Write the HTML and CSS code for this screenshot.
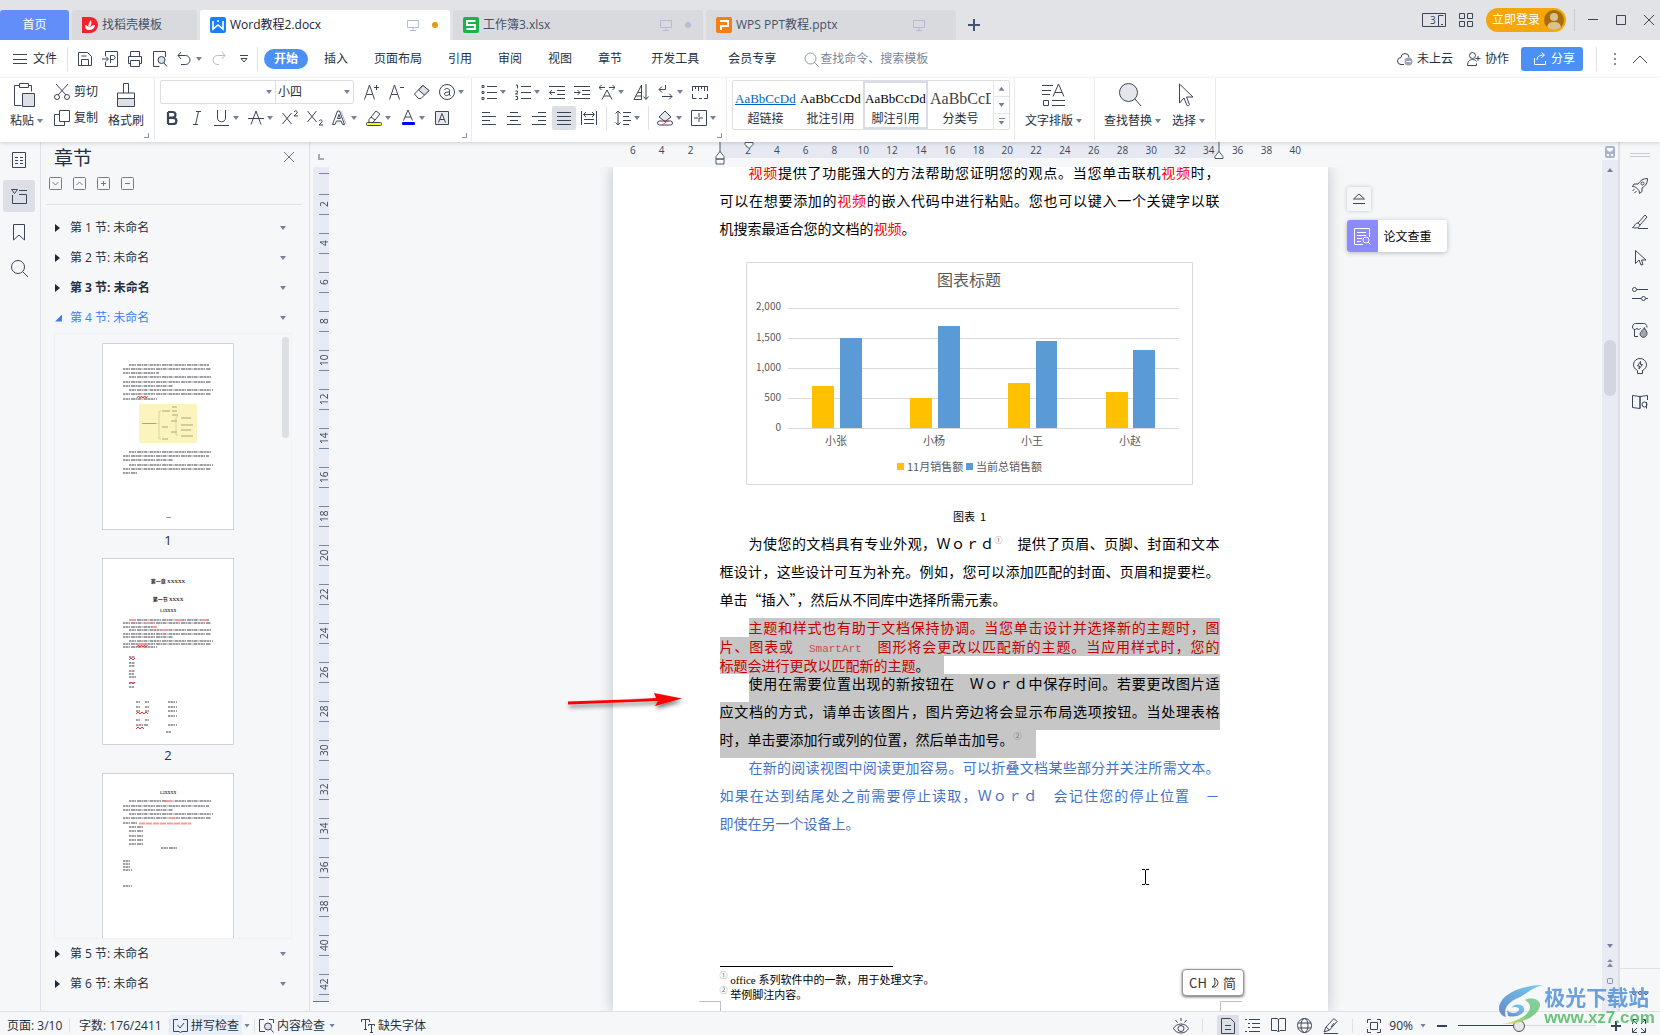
FILE: index.html
```html
<!DOCTYPE html>
<html lang="zh-CN">
<head>
<meta charset="utf-8">
<title>Word教程2.docx</title>
<link rel="stylesheet" href="styles.css">
</head>
<body>
<div class="app">

<header class="tabs">
  <button class="tab home">首页</button>
  <button class="tab docer">
    <svg width="16" height="16" viewBox="0 0 16 16"><path d="M0 0h8a8 8 0 0 1 0 16H0z" fill="#f5222d"/><path d="M3 8c2 0 3 1 3.500 3C6 8 7 5 9 3c1 3 0 6-1.500 8C9 9 11 8 13 8c0 3-3 5-6 5S3 11 3 8z" fill="#fff"/></svg>
    <span>找稻壳模板</span>
  </button>
  <button class="tab file active">
    <svg width="16" height="16" viewBox="0 0 16 16"><rect width="16" height="16" rx="2" fill="#1a80fa"/><path d="M3 4v8l5-4 5 4V4M7 4h2" fill="none" stroke="#fff" stroke-width="1.600"/></svg>
    <span class="name">Word教程2.docx</span>
    <svg class="mon" width="12" height="12" viewBox="0 0 12 12"><path d="M.5 1.500h11v7H.5zM6 8.500v3M3 11.500h6"/></svg>
    <i class="dot"></i>
  </button>
  <button class="tab file">
    <svg width="16" height="16" viewBox="0 0 16 16"><rect width="16" height="16" rx="2" fill="#17b34b"/><path d="M12.500 4H4v4h8v4H3.500" fill="none" stroke="#fff" stroke-width="2"/></svg>
    <span class="name">工作簿3.xlsx</span>
    <svg class="mon" width="12" height="12" viewBox="0 0 12 12"><path d="M.5 1.500h11v7H.5zM6 8.500v3M3 11.500h6"/></svg>
    <i class="dot dim"></i>
  </button>
  <button class="tab file">
    <svg width="16" height="16" viewBox="0 0 16 16"><rect width="16" height="16" rx="2" fill="#f57f17"/><path d="M4 4h8v5H5v4" fill="none" stroke="#fff" stroke-width="2"/></svg>
    <span class="name">WPS PPT教程.pptx</span>
    <svg class="mon" width="12" height="12" viewBox="0 0 12 12"><path d="M.5 1.500h11v7H.5zM6 8.500v3M3 11.500h6"/></svg>
    <i class="dot none"></i>
  </button>
  <button class="plus" aria-label="新建"><svg width="12" height="12" viewBox="0 0 12 12"><path d="M6 0v12M0 6h12" stroke="#44546f" stroke-width="2"/></svg></button>
  <div class="win">
    <svg class="i" width="24" height="14" viewBox="0 0 24 14"><path d="M.5.5h23v13H.5zM16.500 13V2.500h5M19 11.500h2"/><text x="8" y="11" class="n3">3</text></svg>
    <svg class="i" width="14" height="14" viewBox="0 0 14 14"><path d="M.5.500h5v5h-5zM8.500.5h5v5h-5zM.5 8.500h5v5h-5zM8.500 8.500h5v5h-5z"/></svg>
    <button class="login">立即登录<svg width="20" height="20" viewBox="0 0 20 20"><circle cx="10" cy="10" r="10" fill="#a3700c"/><circle cx="10" cy="7" r="4" fill="#d9c08c"/><path d="M3 17c1-4 3-5 7-5s6 1 7 5c-4 4-10 4-14 0z" fill="#d9c08c"/></svg></button>
    <i class="vr tall"></i>
    <svg class="i" width="10" height="10" viewBox="0 0 10 10"><path d="M0 4.500h10"/></svg>
    <svg class="i" width="10" height="10" viewBox="0 0 10 10"><path d="M.5.500h9v9h-9z"/></svg>
    <svg class="i" width="10" height="10" viewBox="0 0 10 10"><path d="M0 0l10 10M10 0L0 10"/></svg>
  </div>
</header>

<nav class="menu">
  <button class="filebtn"><svg class="i" width="14" height="12" viewBox="0 0 14 12"><path d="M0 1.500h14M0 6.500h14M0 10.500h14"/></svg>文件</button>
  <i class="vr"></i>
  <div class="quick">
    <svg class="i" width="16" height="16" viewBox="0 0 16 16"><path d="M1.500 15V1.500h9l4 4V14.500h-13M4.500 14.500v-6h7v6M4.500 5h5"/></svg>
    <svg class="i" width="16" height="16" viewBox="0 0 16 16"><path d="M3.500 5V.5h12v15h-12V11M0 8h6M4 5.500L6.500 8 4 10.500M8.500 12V4.500h3c2 0 2 4 0 4h-3"/></svg>
    <svg class="i" width="16" height="16" viewBox="0 0 16 16"><path d="M3.500 5V.5h9V5M3.500 12.500h-2v-7h13v7h-2M3.500 9.500h9v6h-9z"/></svg>
    <svg class="i" width="16" height="16" viewBox="0 0 16 16"><path d="M13.500 6V.5h-12v15h6"/><circle cx="9.500" cy="9" r="3.500" fill="#dde0e6"/><path d="M12 12l3 3.500"/></svg>
    <svg class="i" width="14" height="14" viewBox="0 0 14 14"><path d="M4 0L1 3.500 4 7M1 3.500h7.500a4.500 4.500 0 0 1 0 9H4"/></svg>
    <i class="caret"></i>
    <svg class="i pale" width="14" height="14" viewBox="0 0 14 14"><path d="M10 0l3 3.500L10 7M13 3.500H5.500a4.500 4.500 0 0 0 0 9H7"/></svg>
    <svg class="i" width="8" height="8" viewBox="0 0 8 8"><path d="M0 .5h8M1 3.500h6L4 7z"/></svg>
  </div>
  <i class="vr"></i>
  <div class="items">
    <button class="pill">开始</button><button>插入</button><button>页面布局</button><button>引用</button><button>审阅</button><button>视图</button><button>章节</button><button class="wide">开发工具</button><button class="wide">会员专享</button>
  </div>
  <label class="search"><svg class="i" width="15" height="15" viewBox="0 0 15 15"><circle cx="6.500" cy="6.500" r="5.500"/><path d="M10.500 10.500l4 4"/></svg><input type="text" placeholder="查找命令、搜索模板" aria-label="查找命令"></label>
  <div class="mright">
    <button><svg class="i" width="16" height="14" viewBox="0 0 16 14"><path d="M7 12.500H4a3.500 3.500 0 0 1 0-7 4 4 0 0 1 8 0"/><circle cx="11.500" cy="9.500" r="4" fill="#9aa3b8" stroke="none"/><path d="M9 9.500h5" stroke="#fff"/></svg>未上云</button>
    <button class="co"><svg class="i" width="14" height="14" viewBox="0 0 14 14"><circle cx="5.500" cy="3.500" r="3"/><path d="M.5 13.500c0-4 2-6 5-6 2 0 3 .5 4 2M.5 13.500h9v-2M8.500 6.500h5M11 4v5"/></svg>协作</button>
    <button class="share"><svg class="i" width="14" height="14" viewBox="0 0 14 14"><path d="M1.500 6v6.500h11V9M4 8c0-3 2-5 7-5M8.500.500L11.500 3 8.500 5.500"/></svg>分享</button>
    <i class="vr tall"></i>
    <svg class="i vdots" width="4" height="14" viewBox="0 0 4 14"><path d="M1 1h2v2H1zM1 6h2v2H1zM1 11h2v2H1z"/></svg>
    <svg class="i" width="14" height="8" viewBox="0 0 14 8"><path d="M0 8l7-7 7 7"/></svg>
  </div>
</nav>

<section class="ribbon">
  <div class="group clip">
    <button class="big drop"><svg class="i" width="22" height="24" viewBox="0 0 22 24"><path d="M6.500 2.500h-5v20h7M15.500 2.500h3v6M6.500.5h9v4h-9z"/><path d="M9.500 10.500h12v13h-12z" fill="#dde0e6"/></svg><span>粘贴<i class="caret"></i></span></button>
    <div class="pair">
      <button><svg class="i" width="16" height="16" viewBox="0 0 16 16"><path d="M2 0l10 11M14 0L4 11"/><circle cx="3" cy="13" r="2.500"/><circle cx="13" cy="13" r="2.500"/></svg>剪切</button>
      <button><svg class="i" width="16" height="16" viewBox="0 0 16 16"><path d="M5.500.5h10v11h-10zM5 4.500H.5v11h10V12"/></svg>复制</button>
    </div>
    <button class="big"><svg class="i" width="20" height="24" viewBox="0 0 20 24"><path d="M7.500 10V.5h5V10M1.500 16v-6h17v6"/><path d="M1.500 15.500h17v8h-17z" fill="#dde0e6"/></svg><span>格式刷</span></button>
    <i class="corner"></i>
  </div>

  <div class="group font">
    <div class="rows">
      <div class="row">
        <div class="combo"><input type="text" class="fname" aria-label="字体"><i class="caret"></i><select class="fsize" aria-label="字号"><option>小四</option></select><i class="caret"></i></div>
        <button class="ib"><svg class="i" width="16" height="16" viewBox="0 0 16 16"><path d="M.5 15.500L5.500 1l5 14.500M2.500 10.500h6M10 3.500h5M12.500 1v5"/></svg></button>
        <button class="ib"><svg class="i" width="16" height="16" viewBox="0 0 16 16"><path d="M.5 15.500L5.500 1l5 14.500M2.500 10.500h6M11 3.500h4"/></svg></button>
        <button class="ib"><svg class="i" width="16" height="16" viewBox="0 0 16 16"><path d="M.5 10L8.500 1.500l6.500 5-8 8H4.500z"/><path d="M4.500 6l4.500-4.500 6 5-4.500 4.500z" fill="#dde0e6"/></svg></button>
        <button class="ib dd"><svg class="i" width="16" height="16" viewBox="0 0 16 16"><circle cx="8" cy="8" r="7.500"/><path d="M5.500 6c.5-2 5-2 5 .5V11c0 .5.500.500 1 .500M10.500 8c-2 0-5 0-5 2s3.500 2 5 0"/></svg><i class="caret"></i></button>
      </div>
      <div class="row r2">
        <button class="ib"><svg class="i" width="16" height="16" viewBox="0 0 16 16"><path d="M4 2v12M4 2h4.500c4 0 4 5.500 0 5.500H4M4 7.800h5c4.500 0 4.500 6.200 0 6.200H4" stroke-width="2.200"/></svg></button>
        <button class="ib"><svg class="i" width="16" height="16" viewBox="0 0 16 16"><path d="M7 1.500h5M4 14.500h5M9.500 1.500L6.500 14.500"/></svg></button>
        <button class="ib dd"><svg class="i" width="16" height="16" viewBox="0 0 16 16"><path d="M3.500 0v8c0 5 8 5 8 0V0M0 15.500h15"/></svg><i class="caret"></i></button>
        <button class="ib dd"><svg class="i" width="16" height="16" viewBox="0 0 16 16"><path d="M3 14.500L8 1l5 13.500M0 8.500h16"/></svg><i class="caret"></i></button>
        <button class="ib"><svg class="i" width="17" height="16" viewBox="0 0 17 16"><path d="M.5 3l9 11M9.500 3l-9 11M12 2c1-2 4-1 3 1l-3 3h4"/></svg></button>
        <button class="ib"><svg class="i" width="17" height="16" viewBox="0 0 17 16"><path d="M.5 1l9 11M9.500 1l-9 11M12 11c1-2 4-1 3 1l-3 3h4"/></svg></button>
        <button class="ib dd"><svg class="i" width="16" height="16" viewBox="0 0 16 16"><path d="M.5 14.500L5.500 1h2l5 13.500h-2L9 11H4.500L3 14.500zM5.500 8.500h3l-1.500-4z"/><path d="M9 1l5 13" stroke="#b4bac8"/></svg><i class="caret"></i></button>
        <button class="ib dd"><svg class="i" width="16" height="16" viewBox="0 0 16 16"><path d="M3 9.500L10 1l4 3-7 8.500H3zM5 7l4 3"/><rect x=".5" y="12.500" width="15" height="3" rx="1" fill="#ff0"/></svg><i class="caret"></i></button>
        <button class="ib dd"><svg class="i" width="16" height="16" viewBox="0 0 16 16"><path d="M3.500 10.500L8 0l4.500 10.500M5 7h6"/><rect x="2" y="12" width="13" height="3" rx="1" fill="#00f" stroke="none"/></svg><i class="caret"></i></button>
        <button class="ib"><svg class="i" width="16" height="16" viewBox="0 0 16 16"><path d="M1.500 1.500h13v13h-13z" fill="#e6e8ec"/><path d="M4.500 12.500L8 3.500l3.500 9M6 9.500h4"/></svg></button>
      </div>
    </div>
    <i class="corner"></i>
  </div>

  <div class="group para">
    <div class="rows">
      <div class="row">
        <button class="ib dd"><svg class="i" width="16" height="16" viewBox="0 0 16 16"><path d="M6 2.500h10M6 8.500h10M6 14.500h10M1 1.500h2v2H1zM1 7.500h2v2H1zM1 13.500h2v2H1z"/></svg><i class="caret"></i></button>
        <button class="ib dd"><svg class="i" width="16" height="16" viewBox="0 0 16 16"><path d="M6 2.500h10M6 8.500h10M6 14.500h10M1 1h1.500v3.500M.5 7h2v1.500l-2 1.500h2.500M.5 12.500h2v3h-2"/></svg><i class="caret"></i></button>
        <button class="ib"><svg class="i" width="16" height="16" viewBox="0 0 16 16"><path d="M0 2.500h16M8 6.500h8M8 10.500h8M0 14.500h16M6 8.500H.5M3 6L.5 8.500 3 11"/></svg></button>
        <button class="ib"><svg class="i" width="16" height="16" viewBox="0 0 16 16"><path d="M0 2.500h16M8 6.500h8M8 10.500h8M0 14.500h16M0 8.500h6M3.500 6L6 8.500 3.500 11"/></svg></button>
        <button class="ib dd"><svg class="i" width="16" height="16" viewBox="0 0 16 16"><path d="M3 15.500L8 6l5 9.500M5 12h6M0 3.500h6M2.500 1L0 3.500 2.500 6M10 3.500h6M13.500 1L16 3.500 13.500 6"/></svg><i class="caret"></i></button>
        <button class="ib"><svg class="i" width="16" height="16" viewBox="0 0 16 16"><path d="M1 15.500L8.500 1v14.500zM5 8.500h3.500M3 12h5.500M13 0v15M10.500 12.500L13 15.500l2.500-3"/></svg></button>
        <button class="ib dd"><svg class="i" width="16" height="16" viewBox="0 0 16 16"><path d="M7.500 1v4.500H1M4 2.500l-3 3 3 3M4 12.500h10M11 9.500l3 3-3 3"/></svg><i class="caret"></i></button>
        <button class="ib"><svg class="i" width="16" height="16" viewBox="0 0 16 16"><path d="M0 2.500h16M.5 2v5M3.500 2v3M6.500 2v5M9.500 2v3M12.500 2v5M15.500 2v5M.5 10v4.500h4M7 14.500h3M12 14.500h3.500V10"/></svg></button>
      </div>
      <div class="row r2">
        <button class="ib"><svg class="i" width="16" height="16" viewBox="0 0 16 16"><path d="M1 2.500h8M1 6.500h14M1 10.500h8M1 14.500h14"/></svg></button>
        <button class="ib"><svg class="i" width="16" height="16" viewBox="0 0 16 16"><path d="M4 2.500h8M1 6.500h14M4 10.500h8M1 14.500h14"/></svg></button>
        <button class="ib"><svg class="i" width="16" height="16" viewBox="0 0 16 16"><path d="M7 2.500h8M1 6.500h14M7 10.500h8M1 14.500h14"/></svg></button>
        <button class="ib on"><svg class="i" width="16" height="16" viewBox="0 0 16 16"><path d="M1 2.500h14M1 6.500h14M1 10.500h14M1 14.500h14"/></svg></button>
        <button class="ib"><svg class="i" width="16" height="16" viewBox="0 0 16 16"><path d="M.5 1v14M15.500 1v14M3 4.500h10M5 2L2.500 4.500 5 7M11 2l2.500 2.500L11 7M3 9.500h10M3 13.500h10"/></svg></button>
        <i class="vr"></i>
        <button class="ib dd"><svg class="i" width="16" height="16" viewBox="0 0 16 16"><path d="M3 1v14M.5 3.500L3 1l2.500 2.500M.5 12.500L3 15l2.500-2.500M8 2.500h8M8 6.500h6M8 10.500h8M8 14.500h6"/></svg><i class="caret"></i></button>
        <i class="vr"></i>
        <button class="ib dd"><svg class="i" width="16" height="16" viewBox="0 0 16 16"><path d="M2 7l6-6 6 6-6 4.500z" fill="#e6e8ec"/><rect x=".5" y="11" width="15" height="4" rx="2"/><path d="M5 15l7-5" stroke="#e05050"/></svg><i class="caret"></i></button>
        <button class="ib dd"><svg class="i" width="16" height="16" viewBox="0 0 16 16"><path d="M.5.500h15v15H.5z"/><path d="M8 3v10M3 8h10" stroke-dasharray="4 1"/></svg><i class="caret"></i></button>
      </div>
    </div>
    <i class="corner"></i>
  </div>

  <div class="group sty">
    <div class="gallery">
      <button class="st link"><b>AaBbCcDd</b><span>超链接</span></button>
      <button class="st"><b>AaBbCcDd</b><span>批注引用</span></button>
      <button class="st sel"><b>AaBbCcDd</b><span>脚注引用</span></button>
      <button class="st lg"><b>AaBbCcD</b><span>分类号</span></button>
      <div class="scr"><button aria-label="上"><i class="caret up"></i></button><button aria-label="下"><i class="caret"></i></button><button class="more" aria-label="更多"><i class="caret"></i></button></div>
    </div>
  </div>

  <div class="group typ">
    <button class="big"><svg class="i" width="23" height="24" viewBox="0 0 23 24"><path d="M0 2.500h11M0 7.500h9M0 11.500h8M11 13.500L16.500 1 22 13.500M13 9.500h7M1.500 17.500h5v5h-5zM10 17.500h13M10 22.500h13"/></svg><span>文字排版<i class="caret"></i></span></button>
  </div>
  <div class="group find">
    <button class="big drop"><svg class="i" width="24" height="24" viewBox="0 0 24 24"><circle cx="10.500" cy="9.500" r="9" fill="#e4e6ea"/><path d="M17 16l6 7"/></svg><span>查找替换<i class="caret"></i></span></button>
    <button class="big drop"><svg class="i" width="16" height="24" viewBox="0 0 16 24"><path d="M1.500 1v19l4.500-5 3 7.500c1 .500 2.500 0 2.500-1L8.500 14H15z"/></svg><span>选择<i class="caret"></i></span></button>
  </div>
</section>

<main class="work">
  <aside class="rail">
    <button><svg class="i" width="16" height="17" viewBox="0 0 16 17"><path d="M1.500.500h13v15h-13zM4 5.500h3M4 8.500h3M4 11.500h3M9 5.500h3M9 8.500h3M9 11.500h3"/></svg></button>
    <button class="on"><svg class="i" width="17" height="17" viewBox="0 0 17 17"><path d="M.5 1.500h6l-3 4zM8 2.500h8M8 6.500h7.500v9h-14V7"/></svg></button>
    <button><svg class="i" width="12" height="17" viewBox="0 0 12 17"><path d="M.5.500h11v15.500L6 11 .5 16z"/></svg></button>
    <button><svg class="i" width="17" height="17" viewBox="0 0 17 17"><circle cx="7" cy="7" r="6.500"/><path d="M12 12l5 5"/></svg></button>
  </aside>

  <aside class="panel">
    <div class="phead"><h2>章节</h2><button aria-label="关闭"><svg class="i" width="10" height="10" viewBox="0 0 10 10"><path d="M0 0l10 10M10 0L0 10"/></svg></button></div>
    <div class="ptools">
      <svg class="i" width="13" height="13" viewBox="0 0 13 13"><rect x=".5" y=".5" width="12" height="12" rx="1"/><path d="M3.500 5l3 3 3-3"/></svg>
      <svg class="i" width="13" height="13" viewBox="0 0 13 13"><rect x=".5" y=".5" width="12" height="12" rx="1"/><path d="M3.500 8l3-3 3 3"/></svg>
      <svg class="i" width="13" height="13" viewBox="0 0 13 13"><rect x=".5" y=".5" width="12" height="12" rx="1"/><path d="M4 6.500h5M6.500 4v5"/></svg>
      <svg class="i" width="13" height="13" viewBox="0 0 13 13"><rect x=".5" y=".5" width="12" height="12" rx="1"/><path d="M4 6.500h5"/></svg>
    </div>
    <div class="tree">
      <button class="sec"><i class="tri"></i><span>第 1 节: 未命名</span><i class="caret"></i></button>
      <button class="sec"><i class="tri"></i><span>第 2 节: 未命名</span><i class="caret"></i></button>
      <button class="sec bold"><i class="tri"></i><span>第 3 节: 未命名</span><i class="caret"></i></button>
      <button class="sec open"><i class="tri"></i><span>第 4 节: 未命名</span><i class="caret"></i></button>
      <div class="thumbs">
        <div class="tlist">
          <figure><svg width="130" height="185" viewBox="0 0 130 185">
            <g class="gk"><path d="M26 21h80M20 25h88M20 29h36M26 33h82M20 38h88M20 42h50M26 46h84M20 50h88M20 55h34"/><path d="M26 108h82M20 112h86M20 116h50M26 121h84M20 125h88M20 129h14"/></g>
            <path class="wv" d="M34 54l1.500-2 1.500 2 1.500-2 1.500 2 1.500-2 1.500 2 1.500-2"/>
            <rect x="36" y="60" width="58" height="39" fill="#fbf4bf"/>
            <path d="M39 79.500h14M59 67h8M59 83h6M59 95h6M69 63h5M69 67h5M69 71h6M68 77h6M68 88h6M78 74h10M78 81h12M78 86h10M78 92h12" stroke="#a9a578" stroke-width="1" /><path d="M53 79.500h3M58 67h-2v28h2M75 73h-2v18h2" fill="none" stroke="#c5c095" stroke-width=".6"/>
            <path d="M63 173.500h5" stroke="#999"/>
          </svg><figcaption>1</figcaption></figure>
          <figure><svg width="130" height="185" viewBox="0 0 130 185">
            <text x="65" y="24" class="th1">第一章 XXXXX</text><text x="65" y="42" class="th2">第一节 XXXX</text><text x="65" y="53" class="th3">1.1XXXX</text>
            <g class="gk"><path d="M26 61h80M20 64h88M20 68h34M26 71h82M20 75h88M20 78h50M26 82h84M20 85h88M20 88h34M26 98h6M26 104h6M26 107h6M26 112h6M26 115h5M26 118h7M26 124h6M26 128h5M33 143h4M42 143h4M65 143h9M33 148h4M42 148h4M65 148h9M33 152h4M42 152h4M65 152h9M33 161h4M42 161h4M65 157h9M33 166h12M65 166h9M63 173h5"/></g>
            <path d="M26 61h7M72 61h7M42 64h6M98 61h6M58 71h7M34 85h8M49 68h5" stroke="#f99" stroke-width="2"/>
            <path class="wv" d="M34 88l1.500-2 1.500 2 1.500-2 1.500 2 1.500-2 1.500 2 1.500-2M26 101l2-2 2 2 2-2M26 125l2-2 2 2 2-2M33 155l2-2 2 2 2-2 2 2 2-2 2 2M33 170l2-2 2 2 2-2 2 2"/>
          </svg><figcaption>2</figcaption></figure>
          <figure><svg width="130" height="185" viewBox="0 0 130 185">
            <text x="65" y="20" class="th3">1.2XXXX</text>
            <g class="gk"><path d="M26 27h83M20 32h86M20 36h50M26 40h84M20 44h88M20 49h14M26 53h14M26 57h14M26 62h14M26 66h14M26 70h14M58 74h16M20 87h8M20 90h7M20 93h7M20 96h9M20 112h9"/></g>
            <path d="M63 27h7M66 44h7M36 49.500h52" stroke="#f99" stroke-width="2" stroke-dasharray="6 1"/>
          </svg><figcaption>3</figcaption></figure>
        </div>
        <i class="sb"></i>
      </div>
      <button class="sec"><i class="tri"></i><span>第 5 节: 未命名</span><i class="caret"></i></button>
      <button class="sec"><i class="tri"></i><span>第 6 节: 未命名</span><i class="caret"></i></button>
    </div>
  </aside>

  <div class="vcol">
    <div class="vcorner"><i></i></div>
    <div class="vruler">
      <div class="u0"></div>
      <div><b>2</b></div><div><b>4</b></div><div><b>6</b></div><div><b>8</b></div><div><b>10</b></div><div><b>12</b></div><div><b>14</b></div><div><b>16</b></div><div><b>18</b></div><div><b>20</b></div><div><b>22</b></div><div><b>24</b></div><div><b>26</b></div><div><b>28</b></div><div><b>30</b></div><div><b>32</b></div><div><b>34</b></div><div><b>36</b></div><div><b>38</b></div><div><b>40</b></div><div><b>42</b></div>
    </div>
  </div>

  <div class="center">
    <div class="hruler">
      <div class="hin">
        <span>6</span><span>4</span><span>2</span><span></span><span>2</span><span>4</span><span>6</span><span>8</span><span>10</span><span>12</span><span>14</span><span>16</span><span>18</span><span>20</span><span>22</span><span>24</span><span>26</span><span>28</span><span>30</span><span>32</span><span>34</span><span>36</span><span>38</span><span>40</span>
        <svg class="mk m1" width="10" height="23" viewBox="0 0 10 23"><path d="M5 0v10M1 17v-2.500l4-5 4 5V17zM1 17h8v5H1z"/></svg>
        <svg class="mk m2" width="10" height="7" viewBox="0 0 10 7"><path d="M1 .500h8v2l-4 4-4-4z"/></svg>
        <svg class="mk m3" width="10" height="18" viewBox="0 0 10 18"><path d="M5 0v10M1 16.500v-2l4-5 4 5v2z"/></svg>
      </div>
    </div>
    <div class="canvas">
      <article class="page">
        <p class="l j in"><em>视频</em>提供了功能强大的方法帮助您证明您的观点。当您单击联机<em>视频</em>时，</p>
        <p class="l j">可以在想要添加的<em>视频</em>的嵌入代码中进行粘贴。您也可以键入一个关键字以联</p>
        <p class="l">机搜索最适合您的文档的<em>视频</em>。</p>
        <svg class="chart" width="447" height="223" viewBox="0 0 447 223">
          <path d="M.5.500h446v222H.5z" fill="#fff" stroke="#d9d9d9"/>
          <text x="223" y="24" class="ct">图表标题</text>
          <path d="M42 46.500h391M42 76.500h391M42 106.500h391M42 136.500h391M42 166.500h391" stroke="#d9d9d9"/>
          <g class="ax"><text x="35" y="48">2,000</text><text x="35" y="79">1,500</text><text x="35" y="109">1,000</text><text x="35" y="139">500</text><text x="35" y="169">0</text></g>
          <path d="M66 124h22v42H66zM164 136h22v30h-22zM262 121h22v45h-22zM360 130h22v36h-22z" fill="#ffc000"/>
          <path d="M94 76h22v90H94zM192 64h22v102h-22zM290 79h21v87h-21zM387 88h22v78h-22z" fill="#5b9bd5"/>
          <g class="cat"><text x="90" y="183">小张</text><text x="188" y="183">小杨</text><text x="286" y="183">小王</text><text x="384" y="183">小赵</text></g>
          <path d="M151 201h7v7h-7z" fill="#ffc000"/><path d="M220 201h7v7h-7z" fill="#5b9bd5"/>
          <g class="leg"><text x="161" y="209">11月销售额</text><text x="230" y="209">当前总销售额</text></g>
        </svg>
        <p class="cap">图表&nbsp; 1</p>
        <p class="l j in">为使您的文档具有专业外观，Ｗｏｒｄ<sup>①</sup>　提供了页眉、页脚、封面和文本</p>
        <p class="l j">框设计，这些设计可互为补充。例如，您可以添加匹配的封面、页眉和提要栏。</p>
        <p class="l">单击“插入”，然后从不同库中选择所需元素。</p>
        <p class="l t j in s red">主题和样式也有助于文档保持协调。当您单击设计并选择新的主题时，图</p>
        <p class="l t j s red">片、图表或　<small>SmartArt</small>　图形将会更改以匹配新的主题。当应用样式时，您的</p>
        <p class="l t s fit red">标题会进行更改以匹配新的主题<span class="blk">。</span></p>
        <p class="l j in s">使用在需要位置出现的新按钮在　Ｗｏｒｄ中保存时间。若要更改图片适</p>
        <p class="l j s">应文档的方式，请单击该图片，图片旁边将会显示布局选项按钮。当处理表格</p>
        <p class="l s fit">时，单击要添加行或列的位置，然后单击加号。<sup>②</sup></p>
        <p class="l j in blue">在新的阅读视图中阅读更加容易。可以折叠文档某些部分并关注所需文本。</p>
        <p class="l j blue">如果在达到结尾处之前需要停止读取，Ｗｏｒｄ　会记住您的停止位置　－</p>
        <p class="l blue">即使在另一个设备上。</p>
        <footer class="fn">
          <hr>
          <p><sup>①</sup> office 系列软件中的一款，用于处理文字。</p>
          <p><sup>②</sup> 举例脚注内容。</p>
        </footer>
        <div class="crops"><i></i><i></i></div>

        <svg class="arrow" width="124" height="30" viewBox="0 0 124 30"><defs><filter id="sh" x="-10%" y="-50%" width="120%" height="220%"><feDropShadow dx="1" dy="3" stdDeviation="2" flood-opacity=".5"/></filter></defs><path d="M4 12.500L92 9.500l-27-0 27-.5-2-5 28 5.500-27 7.500 3-5-90 3.500z" fill="#f00" filter="url(#sh)"/></svg>
        <svg class="ibeam" width="9" height="16" viewBox="0 0 9 16"><path d="M1 .500h3M5 .500h3M4.500 1v14M1 15.500h3M5 15.500h3" stroke="#000" fill="none"/></svg>
        <button class="fold" aria-label="收起"><svg class="i" width="12" height="12" viewBox="0 0 12 12"><path d="M6 1l5.500 5H.500zM0 10.500h12"/></svg></button>
        <button class="chk"><i><svg width="17" height="17" viewBox="0 0 17 17" fill="none" stroke="#fff"><path d="M9 16.500H.5V.5h15V9M3 4.500h9M3 7.500h9M3 10.500h5M3 13.500h4"/><circle cx="12" cy="12" r="3"/><path d="M14 14l2.500 2.500"/></svg></i><span>论文查重</span></button>
        <div class="ime">CH<svg width="8" height="12" viewBox="0 0 8 12" fill="none" stroke="#333"><path d="M3 1c5 2 5 7 1 9H1c3-1 4-4 2-9z"/></svg>简</div>
      </article>
    </div>
  </div>

  <div class="vscroll">
    <svg width="10" height="12" viewBox="0 0 10 12"><rect width="10" height="12" rx="2" fill="#a9b3cb"/><path d="M2 2h6v2L5 6 2 4zM2 8h2v2H2zM6 8h2v2H6z" fill="#fff"/></svg>
    <div class="track">
      <i class="caret up"></i><i class="thumb"></i>
      <i class="caret"></i>
      <svg width="6" height="8" viewBox="0 0 6 8" fill="#7d8ba8"><path d="M3 0l3 3H0zM3 4l3 4H0z"/></svg>
      <svg width="6" height="6" viewBox="0 0 6 6" fill="none" stroke="#7d8ba8"><rect x=".5" y=".5" width="5" height="5" rx="1"/></svg>
      <svg width="6" height="8" viewBox="0 0 6 8" fill="#7d8ba8"><path d="M0 0h6L3 4zM0 5h6L3 8z"/></svg>
    </div>
  </div>

  <aside class="tools">
    <i class="grip"></i>
    <button><svg class="i" width="16" height="16" viewBox="0 0 16 16"><path d="M15.500.500c-5 0-7 2-9.500 5.500L2 6 .5 8.500l3 .5L7 12.500l.5 3 2.500-2V10c4-2.500 5.500-5 5.500-9.500zM.500 13l2-2M2.500 15l2-2"/><circle cx="10.500" cy="5.500" r="1.500"/></svg></button>
    <button><svg class="i" width="16" height="16" viewBox="0 0 16 16"><path d="M6 9l7-8 2 2-7 8zM6 9c-2 0-3 1-3.500 3L.5 13.500c3 1 7 .5 7.500-2.500M6 14.500h10"/></svg></button>
    <button><svg class="i" width="13" height="16" viewBox="0 0 13 16"><path d="M1.500.500v13L5 10l2 5 2-.5-1.500-4.500H12z"/></svg></button>
    <button><svg class="i" width="16" height="16" viewBox="0 0 16 16"><circle cx="2.500" cy="3.500" r="2"/><circle cx="11.500" cy="12.500" r="2"/><path d="M5 3.500h11M0 12.500h9M14 12.500h2"/></svg></button>
    <button><svg class="i" width="16" height="16" viewBox="0 0 16 16"><path d="M6 14.500H2.500V7M.5 6c0-3 1-4.500 3-4.500h8c2 0 3.500 1 3.500 4M1 6c0 2 3.500 2 4 0 0 2 3 2 3.500 0"/><path d="M10 15c-3-2-2-5-.5-5.500 0-1 2-2 3-4 0 2 3 4 2.500 6 0 3-3 4.500-5 3.500z" fill="#3b4558" fill-opacity=".45"/></svg></button>
    <button><svg class="i" width="16" height="16" viewBox="0 0 16 16"><path d="M5.500 12.500C-1.500 9 1.500.5 8 .5s9.500 8.500 2.500 12v3h-5zM8.500 3.500L5.500 8h2l-.5 3 3.500-4.500h-2z"/></svg></button>
    <button><svg class="i" width="16" height="16" viewBox="0 0 16 16"><path d="M8 2.500l7.500-1V6M8 2.500l-7.500-1v12l7.500 1zM8 14.500V2.500"/><circle cx="12.500" cy="10.500" r="2.500"/><path d="M14.500 8v6.500"/></svg></button>
    <hr>
    <svg class="i dots" width="16" height="4" viewBox="0 0 16 4"><circle cx="2" cy="2" r="1.500"/><circle cx="8" cy="2" r="1.500"/><circle cx="14" cy="2" r="1.500"/></svg>
  </aside>
</main>

<footer class="status">
  <span class="pg">页面: 3/10</span><i class="vr"></i>
  <span class="wc">字数: 176/2411</span><i class="vr"></i>
  <button class="spell"><svg class="i" width="15" height="14" viewBox="0 0 15 14"><path d="M5 .500H.5v12H6l1.500 1L9 12.500h5.500V.5H10M4.500 6l2.500 3 4-5"/></svg>拼写检查</button><i class="caret"></i><i class="vr"></i>
  <button class="cont"><svg class="i" width="15" height="14" viewBox="0 0 15 14"><path d="M5 .500H.5v12H6M10 .500h4.500V4"/><circle cx="9" cy="7.500" r="3.500" fill="#dde0e6"/><path d="M11.500 10l3 3.500"/></svg>内容检查</button><i class="caret"></i>
  <button class="miss"><svg class="i" width="14" height="14" viewBox="0 0 14 14"><path d="M.5 3V.5h8V3M4.500.5v10M3 10.500h3M7.500 7V5.500h6V7M10.500 5.500v8M9 13.500h3"/></svg>缺失字体</button>
  <div class="sright">
    <svg class="i" width="16" height="16" viewBox="0 0 16 16"><path d="M.5 10.500c3-6 12-6 15 0-3 6-12 6-15 0zM8 0v3M2.500 2l2 2.500M13.500 2l-2 2.500"/><circle cx="8" cy="10.500" r="3"/></svg>
    <i class="vr"></i>
    <button class="on"><svg class="i" width="14" height="16" viewBox="0 0 14 16"><path d="M.5.500h9l4 4v11H.5zM4 7.500h6M4 11.500h6"/></svg></button>
    <svg class="i" width="15" height="14" viewBox="0 0 15 14"><path d="M0 .500h2M4 .500h11M3 4.500h2M7 4.500h8M3 8.500h2M7 8.500h8M0 12.500h2M4 12.500h11"/></svg>
    <svg class="i" width="15" height="15" viewBox="0 0 15 15"><path d="M7.500 1.500L6 .5H.5v12H6l1.500 1.500L9 12.500h5.500V.5H9zM7.500 1.500v12"/></svg>
    <svg class="i" width="15" height="15" viewBox="0 0 15 15"><circle cx="7.500" cy="7.500" r="7"/><ellipse cx="7.500" cy="7.500" rx="3.500" ry="7"/><path d="M1 5h13M1 10h13"/></svg>
    <svg class="i" width="16" height="16" viewBox="0 0 16 16"><path d="M3 9l8-8.500 3 3L6.500 12zM3 9L1 14l5.500-2M8 9l3-4M1 15.500h14"/></svg>
    <i class="vr"></i>
    <svg class="i" width="14" height="14" viewBox="0 0 14 14"><path d="M4 .5H.5V4M10 .5h3.500V4M4 13.500H.5V10M10 13.500h3.500V10M3.500 3.500h7v7h-7z"/></svg>
    <span class="zv">90%</span><i class="caret"></i>
    <button class="zb" aria-label="缩小"><svg width="10" height="10" viewBox="0 0 10 10"><path d="M0 5h10" stroke="#33415e" stroke-width="2"/></svg></button>
    <input type="range" min="0" max="100" value="44" aria-label="缩放">
    <button class="zb" aria-label="放大"><svg width="10" height="10" viewBox="0 0 10 10"><path d="M0 5h10M5 0v10" stroke="#33415e" stroke-width="2"/></svg></button>
    <svg class="i" width="14" height="14" viewBox="0 0 14 14"><path d="M5 .5H.5V5M9 .5h4.500V5M5 13.500H.5V9M9 13.500h4.500V9M1 1l4 4M13 1L9 5M1 13l4-4M13 13L9 9"/></svg>
  </div>
</footer>

<div class="wm">
  <svg width="46" height="42" viewBox="0 0 46 42"><defs><linearGradient id="wb" x1="0" y1="1" x2="1" y2="0"><stop offset="0" stop-color="#5b7fc4"/><stop offset="1" stop-color="#63c8f2"/></linearGradient><linearGradient id="wg" x1="0" y1="1" x2="1" y2="0"><stop offset="0" stop-color="#f2e84a"/><stop offset=".5" stop-color="#6cc67a"/><stop offset="1" stop-color="#7ccf9a"/></linearGradient></defs>
  <path d="M45 1C24 1 2 10 1 24c0 5 3 8 7 9-3-8 2-15 12-19 8-3 12-10 25-13z" fill="url(#wb)"/><path d="M10 32c8 2 18-2 16-8-1-4-10-5-12 0 2-2 8-1 7 2-2 4-9 4-12 0" fill="url(#wb)"/><path d="M27 16c6-3 14-1 15 4 1 10-17 21-38 20 14-2 28-9 28-17 0-3-2-5-5-7z" fill="url(#wg)"/></svg>
  <div><strong>极光下载站</strong><span>www.xz7.com</span></div>
</div>
</div>
</body>
</html>
```
FILE: styles.css
```css
* { box-sizing: border-box; }
body { margin: 0; font: 12px/16px "Open Sans", "Noto Sans CJK SC", sans-serif; color: #262f40; }
button { font: inherit; color: inherit; background: none; border: 0; padding: 0; display: flex; align-items: center; white-space: nowrap; flex: none; }
input, select { font: inherit; color: inherit; border: 0; padding: 0; background: none; outline: 0; min-width: 0; }
p, h2, figure { margin: 0; }
svg { flex: none; display: block; }
.i { fill: none; stroke: #3b4558; }
.app { height: 100vh; display: flex; flex-direction: column; background: #fff; position: relative; overflow: hidden; }
.caret { flex: none; width: 6px; height: 4px; background: #75809a; clip-path: polygon(0 0, 100% 0, 50% 100%); }
.caret.up { clip-path: polygon(50% 0, 100% 100%, 0 100%); }
.vr { flex: none; width: 1px; height: 24px; background: #dfe1e5; }

/* tab strip */
.tabs { flex: none; height: 40px; background: #e1e3e7; display: flex; align-items: flex-end; gap: 3px; }
.tab { height: 30px; border-radius: 3px 3px 0 0; background: #d8dade; color: #44506a; }
.home { width: 69px; justify-content: center; background: #628efa; color: #fff; }
.docer { width: 125px; padding-left: 10px; gap: 4px; }
.file { width: 250px; padding: 0 12px 0 10px; gap: 4px; }
.file.active { background: #fff; color: #1c2432; }
.name { flex: 1; text-align: left; }
.mon { fill: none; stroke: #b3bbd6; }
.dot { width: 6px; height: 6px; border-radius: 3px; background: #e59a12; margin-left: 9px; }
.dim { background: #b4bfd4; }
.none { background: none; }
.plus { height: 30px; padding-left: 9px; }
.win { margin-left: auto; height: 40px; padding-right: 6px; display: flex; align-items: center; align-self: flex-start; gap: 18px; }
.win > :nth-child(2) { margin-left: -5px; }
.login { height: 24px; border-radius: 12px; background: #f5a60a; color: #fff; padding: 0 2px 0 6px; gap: 4px; margin-left: -5px; }
.win .vr { margin: 0 -5px 0 -10px; background: #c7cad0; height: 22px; }
.n3 { font-size: 10px; fill: #3b4558; stroke: none; }

/* menu row */
.menu { flex: none; height: 38px; display: flex; align-items: center; }
.filebtn { padding: 0 10px 0 13px; gap: 6px; }
.quick { display: flex; align-items: center; gap: 9px; width: 189px; padding-left: 9px; }
.quick .caret { margin-left: -4px; }
.quick > :nth-child(7) { margin-left: 1px; }
.quick > :nth-child(8) { margin-left: 5px; }
.pale { stroke: #b5bac4; }
.items { display: flex; align-items: center; gap: 26px; padding-left: 6px; }
.pill { height: 20px; border-radius: 10px; background: #4a90f5; color: #fff; font-weight: 700; padding: 0 10px; margin-right: -10px; }
.wide { margin-left: 3px; }
.search { display: flex; align-items: center; gap: 1px; padding-left: 28px; }
.search .i { stroke: #8a96b0; }
.search input { width: 120px; }
.search input::placeholder { color: #7b869c; opacity: 1; }
.mright { margin-left: auto; display: flex; align-items: center; gap: 12px; padding-right: 13px; }
.mright button { gap: 4px; }
.mright .co { margin-left: -2px; }
.share { height: 24px; background: #4a90f5; color: #fff; border-radius: 3px; padding: 0 8px; }
.share .i { stroke: #fff; }
.mright .vr { margin: 0 4px 0 1px; }
.mright svg:last-child { margin-left: 4px; }
.mright .vdots { fill: #8a8f9a; stroke: none; }

/* ribbon */
.ribbon { flex: none; height: 64px; display: flex; align-items: flex-start; position: relative; z-index: 2; box-shadow: 0 1px 4px rgba(40, 50, 70, .2); background: #fff; }
.group { height: 62px; display: flex; align-items: flex-start; padding-top: 2px; border-right: 1px solid #e9ebee; }
.corner { align-self: flex-end; width: 5px; height: 5px; border: solid #8a93a6; border-width: 0 1px 1px 0; margin-bottom: 2px; flex: none; }
.big { flex-direction: column; gap: 6px; padding-top: 3px; }
.big span { display: flex; align-items: center; gap: 3px; }
.drop svg { margin-right: 5px; }
.pair { display: flex; flex-direction: column; gap: 2px; }
.pair button { height: 24px; gap: 4px; }
.clip { width: 155px; padding-left: 10px; }
.clip .pair { margin: 0 10px 0 11px; }
.font { width: 317px; padding-left: 5px; }
.font .rows { width: 302px; }
.row { display: flex; height: 24px; align-items: center; }
.r2 { margin-top: 2px; padding-left: 4px; }
.combo { width: 194px; height: 24px; border: 1px solid #dcdee2; border-radius: 2px; display: flex; align-items: center; margin-right: 10px; flex: none; }
.fname { width: 105px; height: 22px; }
.fsize { width: 69px; height: 22px; margin-left: 3px; padding-left: 2px; border-left: 1px solid #dcdee2; appearance: none; }
.ib { width: 25px; height: 24px; gap: 3px; }
.dd { width: 34px; }
.on { background: #dce0e6; border-radius: 2px; }
.ib.on { width: 24px; padding-left: 4px; margin: 0 5px 0 -4px; }
.para { width: 255px; padding-left: 9px; }
.para .rows { width: 236px; }
.para .r2 { padding-left: 0; }
.para .vr { margin-right: 8px; }
.para .vr ~ .vr { margin-left: -1px; }
.sty { width: 288px; padding-left: 5px; }
.gallery { width: 278px; height: 50px; border: 1px solid #dcdee2; border-radius: 2px; display: flex; }
.st { width: 65px; height: 48px; padding: 0 2px; flex-direction: column; overflow: hidden; }
.st b { font: 13px/24px "Liberation Serif", serif; color: #000; width: 61px; text-align: left; height: 30px; padding-top: 6px; }
.st span { line-height: 16px; }
.link b { color: #0563c1; text-decoration: underline; }
.sel { outline: 2px solid #d9dce2; outline-offset: -2px; }
.lg b { font-size: 16px; color: #444; overflow: hidden; }
.scr { flex: 1; display: flex; flex-direction: column; border-left: 1px solid #e3e5e9; }
.scr button { flex: 1; justify-content: center; border-bottom: 1px solid #e3e5e9; }
.scr button:last-child { border: 0; }
.more { flex-direction: column; gap: 2px; }
.more::before { content: ""; width: 6px; height: 1px; background: #75809a; }
.typ { width: 80px; padding-left: 10px; }
.find { width: 121px; padding-left: 9px; gap: 11px; }

/* work area */
.work { flex: 1; min-height: 0; display: flex; background: #f5f7f9; }
.rail { flex: none; width: 41px; border-right: 1px solid #dfe2e8; padding: 2px 5px 0 3px; display: flex; flex-direction: column; gap: 4px; }
.rail button { height: 32px; justify-content: center; }
.panel { flex: none; width: 269px; border-right: 1px solid #dfe2e8; display: flex; flex-direction: column; padding: 0 7px 12px 5px; }
.phead { display: flex; justify-content: space-between; align-items: center; height: 30px; padding: 0 8px; }
.phead h2 { font: 19px/28px "Noto Sans CJK SC", sans-serif; }
.phead .i { stroke: #6b7690; }
.ptools { display: flex; gap: 11px; height: 33px; padding: 5px 0 0 3px; border-bottom: 1px solid #dfe2e6; }
.ptools .i { stroke: #757b87; }
.tree { flex: 1; min-height: 0; display: flex; flex-direction: column; padding-top: 8px; }
.sec { height: 30px; padding: 0 16px 0 9px; }
.sec span { flex: 1; text-align: left; padding-left: 10px; }
.tri { width: 5px; height: 8px; background: #1f2838; clip-path: polygon(0 0, 100% 50%, 0 100%); }
.bold { font-weight: 700; }
.open { color: #3f7df6; }
.open .tri { width: 7px; height: 7px; background: #3f7df6; clip-path: polygon(100% 0, 100% 100%, 0 100%); margin-right: -2px; }
.thumbs { flex: 1; min-height: 0; margin: 0 10px 0 8px; border: 1px solid #f0f2f5; overflow: hidden; display: flex; padding-top: 9px; }
.tlist { flex: 1; padding-left: 47px; }
.tlist figure { width: 132px; height: 215px; }
.tlist svg { border: 1px solid #d0d3d6; background: #fff; box-sizing: content-box; }
.tlist figcaption { text-align: center; font-size: 13px; line-height: 20px; }
.sb { flex: none; width: 7px; height: 101px; border-radius: 4px; background: #dde0e3; margin: -6px 2px 0 0; }
.gk { stroke: #a0a0a4; stroke-width: 2; stroke-dasharray: 2 .5 3 .500 1 1 4 .5; fill: none; }
.wv { stroke: #e33; stroke-width: 1; fill: none; }
.th1, .th2, .th3 { font: 700 5px "Liberation Serif", "Noto Sans CJK SC", serif; text-anchor: middle; fill: #222; }
.th3 { font-size: 4px; }

.vcol { flex: none; width: 20px; display: flex; flex-direction: column; padding-left: 3px; }
.vcorner { height: 25px; padding: 12px 0 0 5px; }
.vcorner i { display: block; width: 6px; height: 6px; border: solid #a6aab8; border-width: 0 0 2px 2px; }
.vruler { flex: 1; min-height: 0; overflow: hidden; width: 16px; background: #e8ebf3; margin-bottom: 9px; border-bottom: 1px solid #6b7690; font-size: 10px; color: #3d4658; }
.vruler div { height: 39px; padding: 9px 0 9px 6px; }
.vruler div.u0 { height: 18px; padding-top: 6px; }
.u0::before { content: ""; display: block; height: 1px; background: #7d87a0; }
.vruler b { display: flex; font-weight: 400; height: 21px; width: 10px; border: solid #7d87a0; border-width: 1px 0; writing-mode: vertical-rl; transform: rotate(180deg); justify-content: center; align-items: center; text-align: center; line-height: 10px; }

.center { flex: 1; min-width: 0; display: flex; flex-direction: column; }
.hruler { flex: none; height: 25px; padding-left: 8px; }
.hin { position: relative; width: 715px; height: 16px; margin: 0 auto; padding: 0 18px 0 6px; display: flex; font-size: 10px; line-height: 16px; color: #3d4658; background: linear-gradient(#e6e9f1, #e6e9f1) 107px 0 / 499px 16px no-repeat; }
.hin span { flex: 1; text-align: center; }
.mk { position: absolute; top: 0; fill: #fff; stroke: #4d5870; }
.m1 { left: 102px; } .m2 { left: 131px; } .m3 { left: 601px; }
.canvas { flex: 1; min-height: 0; overflow: hidden; padding-left: 8px; display: flex; justify-content: center; }
.page { position: relative; width: 715px; background: #fff; box-shadow: 0 0 14px rgba(30, 40, 50, .25); padding: 0 108px 0 107px; display: flex; flex-direction: column; align-items: stretch; color: #000; font-family: "Noto Sans CJK SC", sans-serif; }
.l { font-size: 14px; line-height: 18px; height: 28px; white-space: nowrap; flex: none; }
.l:first-child { margin-top: -4px; }
.j { text-align: justify; text-align-last: justify; white-space: normal; }
.in { margin-left: 29px; }
.page em { font-style: normal; color: #f00; }
.t { height: 19px; }
.t.fit { height: 18px; }
.s { background: #c6c6c6; }
.fit { align-self: flex-start; padding-right: 14px; }
.red { color: #c80000; }
.blk { color: #000; }
.blue { color: #4472c4; }
.page sup { font-size: 8px; line-height: 8px; vertical-align: 6px; color: #777; }
.page small { font: 11px/12px "Liberation Mono", monospace; color: #c65050; }
.chart { margin: 15px 0 0 26px; }
.ct { font-size: 16px; text-anchor: middle; fill: #595959; }
.ax { font-size: 10px; text-anchor: end; fill: #595959; }
.cat { font-size: 11px; text-anchor: middle; fill: #595959; }
.leg { font-size: 11px; fill: #595959; }
.cap { font-size: 11px; line-height: 16px; text-align: center; padding: 23px 0 10px; }
.fn { margin-top: auto; font: 11px/14px "Liberation Serif", "Noto Sans CJK SC", serif; height: 35px; }
.fn hr { width: 173px; margin: 0 0 5px; border: 0; border-top: 1px solid #000; }
.crops { display: flex; justify-content: space-between; margin: 0 -22px 0 -21px; height: 10px; flex: none; }
.crops i { width: 22px; border: solid #c0c0c0; border-width: 1px 1px 0 0; }
.crops i:last-child { border-width: 1px 0 0 1px; }
.arrow { position: absolute; left: -49px; top: 522px; }
.ibeam { position: absolute; left: 528px; top: 702px; }
.fold { position: absolute; left: 734px; top: 20px; width: 24px; height: 24px; border-radius: 2px; justify-content: center; background: #f6f6f6; box-shadow: 0 0 4px rgba(0, 0, 0, .2); }
.chk { position: absolute; left: 734px; top: 53px; width: 100px; height: 32px; border-radius: 3px; overflow: hidden; background: #fff; box-shadow: 0 1px 5px rgba(0, 0, 0, .25); }
.chk i { width: 31px; height: 32px; background: #8b8bff; display: flex; align-items: center; justify-content: center; }
.chk span { padding-left: 6px; }
.ime { position: absolute; left: 569px; bottom: 15px; width: 62px; height: 27px; border-radius: 4px; border: 1px solid #999; background: #fff; box-shadow: 0 1px 3px rgba(0, 0, 0, .6); display: flex; align-items: center; justify-content: center; gap: 4px; font-size: 13px; color: #333; }

.vscroll { flex: none; width: 18px; border-right: 2px solid #dcdfe8; padding-top: 4px; display: flex; flex-direction: column; align-items: center; }
.track { flex: 1; width: 16px; margin-top: 2px; background: #e9ebf2; display: flex; flex-direction: column; align-items: center; padding: 8px 0; gap: 11px; }
.thumb { width: 12px; height: 56px; border-radius: 6px; background: #d3d6de; margin: 157px 0 auto; }
.tools { flex: none; width: 40px; display: flex; flex-direction: column; align-items: center; padding-top: 11px; }
.grip { width: 20px; height: 4px; border: solid #c9ccd2; border-width: 1px 0; margin-bottom: 11px; }
.tools button { height: 36px; }
.tools hr { width: 100%; border: 0; border-top: 1px solid #dfe2e6; margin: auto 0 22px; }
.dots { margin-bottom: 16px; }

/* status bar */
.status { flex: none; height: 24px; border-top: 1px solid #dfe1e4; background: #f5f7f9; display: flex; align-items: center; padding: 4px 14px 0 7px; }
.status .vr { height: 14px; }
.pg { width: 62px; }
.wc { padding-left: 9px; width: 99px; }
.status button { gap: 3px; }
.spell { background: #e8effa; padding: 2px 3px; height: 22px; }
.spell + .caret { margin: 0 4px 0 2px; }
.cont { padding: 0 4px 0 4px; }
.miss { padding-left: 26px; }
.sright { margin-left: auto; display: flex; align-items: center; gap: 11px; }
.sright .on { width: 22px; height: 22px; justify-content: center; margin-right: -5px; }
.sright .vr { margin: 0 3px 0 2px; }
.zv { margin: 0 -4px 0 -3px; }
.status input { width: 138px; height: 14px; appearance: none; margin: 0 4px 0 0; background: linear-gradient(90deg, #33415e 44%, #d5d8de 44%) center / 100% 1px no-repeat; }
.status input::-webkit-slider-thumb { appearance: none; width: 12px; height: 12px; border-radius: 6px; border: 1px solid #555; background: #e6e6e8; }

.wm { position: absolute; right: 5px; bottom: 7px; display: flex; opacity: .9; z-index: 3; }
.wm div { display: flex; flex-direction: column; }
.wm strong { font: 700 21px/24px "Noto Sans CJK SC", sans-serif; color: #5b97d8; }
.wm span { font: 700 17px/20px "Liberation Sans", sans-serif; color: #5cbf6c; }
```
